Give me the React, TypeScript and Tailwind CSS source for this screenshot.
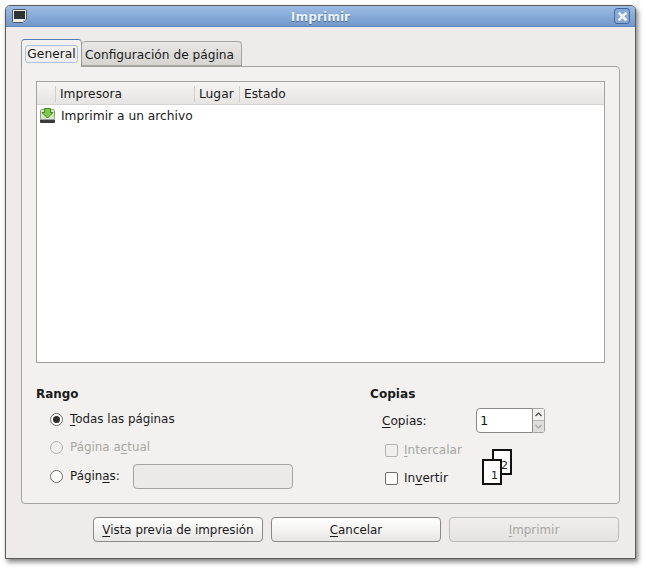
import type { ReactNode } from "react";

const font = "font-['DejaVu_Sans',sans-serif]";

function Radio({ checked, disabled }: { checked?: boolean; disabled?: boolean }) {
  return (
    <span
      className={`flex h-[13px] w-[13px] shrink-0 items-center justify-center rounded-full border ${
        disabled ? "border-[#b5b3b0] bg-[#f0efed]" : "border-[#6f6c68] bg-white"
      }`}
    >
      {checked && <span className="h-[7px] w-[7px] rounded-full bg-[#2e2e2e]" />}
    </span>
  );
}

function Check({ disabled }: { disabled?: boolean }) {
  return (
    <span
      className={`h-[13px] w-[13px] shrink-0 rounded-[2px] border ${
        disabled ? "border-[#b5b3b0] bg-[#f0efed]" : "border-[#6f6c68] bg-white"
      }`}
    />
  );
}

function U({ children }: { children: ReactNode }) {
  return <span className="underline underline-offset-2">{children}</span>;
}

function Button({
  children,
  width,
  disabled,
}: {
  children: ReactNode;
  width: string;
  disabled?: boolean;
}) {
  return (
    <button
      type="button"
      className={`flex h-[25px] items-center justify-center rounded-[4px] border pt-[2px] text-[11.9px] ${width} ${
        disabled
          ? "border-[#bdbbb8] bg-gradient-to-b from-[#f0efed] to-[#e4e3e1] text-[#a8a6a3]"
          : "border-[#8b8986] bg-gradient-to-b from-white to-[#e8e7e5] text-[#1a1a1a]"
      }`}
    >
      {children}
    </button>
  );
}

function PrinterFileIcon() {
  return (
    <svg width="17" height="16" viewBox="0 0 17 16">
      <rect x="1.5" y="1.5" width="14" height="10" rx="1" fill="#d5e8c6" stroke="#8aa774" />
      <path d="M5.5 0.5h6v4h2.5L8.5 10 3 4.5h2.5z" fill="#7ccb4a" stroke="#3f8a1e" />
      <path d="M1 11h15v3a1 1 0 0 1-1 1H2a1 1 0 0 1-1-1z" fill="#3a3a3a" />
      <rect x="1" y="11" width="15" height="1" fill="#9a9a9a" />
    </svg>
  );
}

function WindowIcon() {
  return (
    <svg width="15" height="14" viewBox="0 0 15 14">
      <path d="M0.5 1.5a1 1 0 0 1 1-1h12a1 1 0 0 1 1 1V10l-3.5 3.5H1.5a1 1 0 0 1-1-1z" fill="#eeeeec" stroke="#555" />
      <rect x="2" y="2" width="11" height="8" fill="#2e3436" />
      <path d="M11 13.5V10.5h3.5z" fill="#bbb" />
    </svg>
  );
}

function CloseIcon() {
  return (
    <span className="flex h-[16px] w-[16px] items-center justify-center rounded-[3px] border border-[#44689a] bg-[#86a9d6]">
      <svg width="11" height="11" viewBox="0 0 11 11">
        <path d="M2.5 2.5l6 6M8.5 2.5l-6 6" stroke="#eef3fa" strokeWidth="2.6" strokeLinecap="square" />
      </svg>
    </span>
  );
}

function HeaderCell({ label, width }: { label: string; width?: string }) {
  return (
    <div className={`flex h-[16px] items-center border-r border-[#d0cfcc] pl-[4px] ${width ?? ""}`}>
      {label}
    </div>
  );
}

export default function App() {
  return (
    <div className={`h-[568px] w-[645px] overflow-hidden bg-white pl-[5px] pt-[5px] ${font} text-[12.25px] text-[#1a1a1a]`}>
      <div className="flex h-[554px] w-[631px] flex-col rounded-t-[5px] border border-[#5a5a58] bg-[#edecea] shadow-[2px_3px_5px_rgba(0,0,0,0.5)]">
        {/* barra de titulo */}
        <div className="flex h-[21px] shrink-0 items-center justify-between rounded-t-[4px] border-b border-[#5f87bd] bg-gradient-to-b from-[#9dbce4] to-[#7199cb] pl-[6px] pr-[5px]">
          <WindowIcon />
          <span className="pt-[2px] font-bold text-[#e9eff8] [text-shadow:0_1px_1px_#4a6a96]">Imprimir</span>
          <CloseIcon />
        </div>

        <div className="flex flex-1 flex-col px-[15px] pt-[11px]">
          {/* pestanas */}
          <div className="relative z-10 flex h-[28px] items-end">
            <div className="-mb-px flex h-[28px] w-[61px] flex-col rounded-t-[4px] border border-b-0 border-[#9b9a97] border-t-[#4f7cb5] bg-[#f2f1ef] px-[3px] pt-[5px]">
              <span className="flex h-[18px] items-center justify-center rounded-[3px] border border-[#a8c0de] leading-none">General</span>
            </div>
            <div className="flex h-[25px] w-[160px] items-center justify-center rounded-t-[4px] border border-l-0 border-[#a5a4a1] bg-gradient-to-b from-[#e8e7e5] to-[#d6d5d2] pt-[4px] pr-[4px] text-[12.2px]">
              Configuración de página
            </div>
          </div>

          {/* panel */}
          <div className="flex h-[438px] flex-col rounded-b-[4px] rounded-tr-[4px] border border-[#a5a4a1] bg-[#f2f1ef] px-[14px] pt-[14px]">
            <div className="flex h-[282px] flex-col border border-[#a3a2a0] bg-white">
              <div className="flex h-[23px] shrink-0 items-center border-b border-[#d5d4d1] bg-gradient-to-b from-[#f6f5f4] to-[#e6e5e3] pt-[2px]">
                <HeaderCell label="" width="w-[19px]" />
                <HeaderCell label="Impresora" width="w-[139px]" />
                <HeaderCell label="Lugar" width="w-[45px]" />
                <div className="pl-[4px]">Estado</div>
              </div>
              <div className="flex h-[21px] items-center pl-[2px]">
                <PrinterFileIcon />
                <span className="ml-[5px] pt-[2px]">Imprimir a un archivo</span>
              </div>
            </div>

            <div className="flex flex-1 pt-[24px]">
              {/* rango */}
              <div className="w-[334px] text-[11.9px]">
                <div className="font-bold leading-[15px]">Rango</div>
                <div className="mt-[7px] flex h-[20px] items-center gap-[7px] pl-[14px]">
                  <Radio checked />
                  <span className="pt-[2px]"><U>T</U>odas las páginas</span>
                </div>
                <div className="mt-[8px] flex h-[20px] items-center gap-[7px] pl-[14px] text-[#a8a6a3]">
                  <Radio disabled />
                  <span className="pt-[2px]">Página a<U>c</U>tual</span>
                </div>
                <div className="mt-[7px] flex h-[24px] items-center pl-[14px]">
                  <Radio />
                  <span className="ml-[7px] w-[63px] pt-[2px]">Págin<U>a</U>s:</span>
                  <span className="h-[25px] w-[160px] rounded-[4px] border border-[#a5a4a1] bg-[#ebeae8]" />
                </div>
              </div>

              {/* copias */}
              <div className="flex-1 text-[12.1px]">
                <div className="font-bold leading-[15px]">Copias</div>
                <div className="mt-[6px] flex h-[25px] items-center pl-[12px]">
                  <span className="w-[94px] pt-[2px]"><U>C</U>opias:</span>
                  <div className="flex h-[25px] w-[69px]">
                    <span className="flex h-full w-[57px] items-center rounded-l-[4px] border border-[#8b8986] bg-white pl-[3px] text-[13px]">1</span>
                    <div className="flex h-full w-[12px] flex-col rounded-r-[3px] border border-l-0 border-[#a5a4a1] text-[#555]">
                      <span className="flex flex-1 items-center justify-center border-b border-[#b5b4b1] bg-[#f2f1ef]">
                        <svg width="7" height="5" viewBox="0 0 7 5"><path d="M0.5 4L3.5 1l3 3" fill="none" stroke="#3f3f3f" strokeWidth="1.2" /></svg>
                      </span>
                      <span className="flex flex-1 items-center justify-center bg-[#dfdedc]">
                        <svg width="7" height="5" viewBox="0 0 7 5"><path d="M0.5 1L3.5 4l3-3" fill="none" stroke="#a5a4a1" strokeWidth="1.2" /></svg>
                      </span>
                    </div>
                  </div>
                </div>
                <div className="flex">
                  <div className="w-[108px] pl-[15px]">
                    <div className="mt-[7px] flex h-[20px] items-center gap-[6px] text-[#a8a6a3]">
                      <Check disabled />
                      <span><U>I</U>ntercalar</span>
                    </div>
                    <div className="mt-[8px] flex h-[20px] items-center gap-[6px]">
                      <Check />
                      <span>In<U>v</U>ertir</span>
                    </div>
                  </div>
                  <div className="relative ml-[4px] mt-[16px] h-[36px] w-[30px]">
                    <span className="absolute left-[10px] top-0 flex h-[26px] w-[20px] items-end justify-end border-2 border-[#111] bg-white pb-[2px] pr-[2px] text-[11px] leading-[11px] text-[#222]">2</span>
                    <span className="absolute left-0 top-[10px] flex h-[26px] w-[20px] items-end justify-end border-2 border-[#111] bg-white pb-[2px] pr-[2px] text-[11px] leading-[11px] text-[#222]">1</span>
                  </div>
                </div>
              </div>
            </div>
          </div>

          {/* botones */}
          <div className="mt-[13px] flex justify-end gap-[8px] pr-px">
            <Button width="w-[170px]"><span><U>V</U>ista previa de impresión</span></Button>
            <Button width="w-[170px]"><span><U>C</U>ancelar</span></Button>
            <Button width="w-[170px]" disabled><span><U>I</U>mprimir</span></Button>
          </div>
        </div>
      </div>
    </div>
  );
}
